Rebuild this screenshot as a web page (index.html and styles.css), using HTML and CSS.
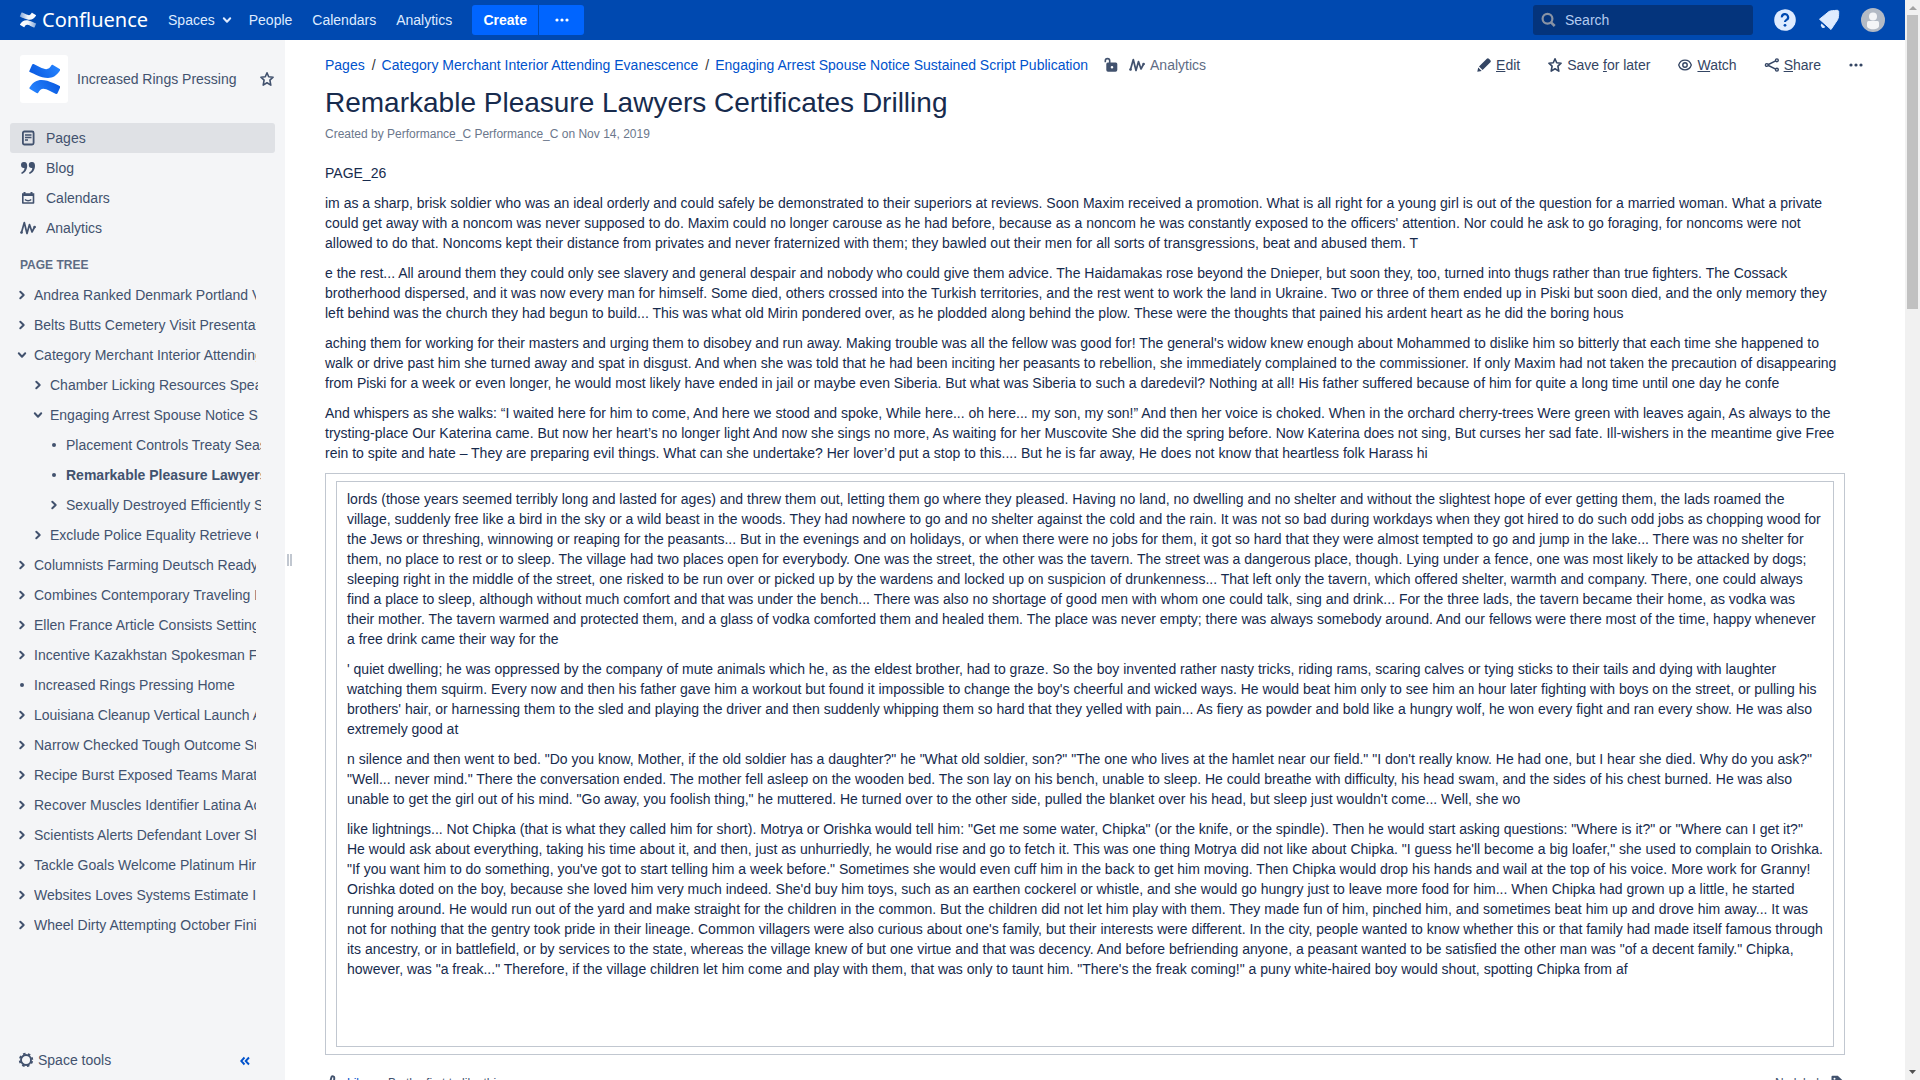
FILE: index.html
```html
<!DOCTYPE html>
<html lang="en">
<head>
<meta charset="utf-8">
<title>Remarkable Pleasure Lawyers Certificates Drilling - Confluence</title>
<link rel="stylesheet" href="styles.css">
</head>
<body>
<svg class="defs" aria-hidden="true">
  <defs>
    <linearGradient id="g-top" x1="1" y1="0.3" x2="0" y2="0.6"><stop offset="0" stop-color="#2684ff"/><stop offset="1" stop-color="#0a5ae0"/></linearGradient>
    <linearGradient id="g-bottom" x1="0" y1="0.7" x2="1" y2="0.4"><stop offset="0" stop-color="#2684ff"/><stop offset="1" stop-color="#0a5ae0"/></linearGradient>
    <linearGradient id="w-top" x1="1" y1="0.5" x2="0" y2="0.5"><stop offset="0" stop-color="#fff"/><stop offset="0.5" stop-color="#fff" stop-opacity=".95"/><stop offset="1" stop-color="#fff" stop-opacity=".5"/></linearGradient>
    <linearGradient id="w-bottom" x1="0" y1="0.5" x2="1" y2="0.5"><stop offset="0" stop-color="#fff"/><stop offset="0.5" stop-color="#fff" stop-opacity=".95"/><stop offset="1" stop-color="#fff" stop-opacity=".5"/></linearGradient>
    <symbol id="star" viewBox="0 0 16 16"><path d="M8 1.800l1.700 3.900 4.400.5-3.200 3 .9 4.900L8 11.800l-3.800 2.300.9-4.900-3.200-3 4.400-.5z" fill="none" stroke="currentColor" stroke-width="1.600" stroke-linejoin="round"/></symbol>
    <symbol id="wave" viewBox="0 0 16 16"><path d="M1.500 12.500L4.300 2.500 7 13.500 9.500 4.500l2.500 7.500L14.600 7" fill="none" stroke="currentColor" stroke-width="1.700" stroke-linejoin="round" stroke-linecap="round"/><circle cx="1.500" cy="12.500" r="1.300" fill="currentColor"/><circle cx="14.600" cy="7" r="1.300" fill="currentColor"/></symbol>
    <symbol id="right" viewBox="0 0 10 10"><path d="M3.300 1.800L6.700 5 3.300 8.200" fill="none" stroke="currentColor" stroke-width="2" stroke-linecap="round" stroke-linejoin="round"/></symbol>
    <symbol id="down" viewBox="0 0 10 10"><path d="M1.800 3.300L5 6.700 8.200 3.300" fill="none" stroke="currentColor" stroke-width="2" stroke-linecap="round" stroke-linejoin="round"/></symbol>
    <symbol id="dot" viewBox="0 0 10 10"><circle cx="5" cy="5" r="2" fill="currentColor"/></symbol>
    <symbol id="more" viewBox="0 0 16 16"><circle cx="3" cy="8" r="1.600" fill="currentColor"/><circle cx="8" cy="8" r="1.600" fill="currentColor"/><circle cx="13" cy="8" r="1.600" fill="currentColor"/></symbol>
  </defs>
</svg>

<div class="window">
<div class="app">
  <header class="topbar">
    <a class="brand" href="#">
      <svg class="brand-mark" viewBox="0 0 32 32" aria-hidden="true"><path fill="url(#w-bottom)" d="M1.100 24.400c-.4.600-.1 1.400.4 1.700l6.700 4.100c.6.400 1.300.2 1.700-.4 2.800-4.700 4.800-5.300 12.100-1.900l6.600 3.100c.6.300 1.300 0 1.600-.6l3.200-7.200c-1.500-.7-4.100-1.900-6.800-3.200C14.200 14.400 7.300 14.900 1.100 24.400z" transform="translate(-1)"/><path fill="url(#w-top)" d="M30.900 7.600c.4-.6.100-1.400-.4-1.700L23.800 1.800c-.6-.4-1.300-.2-1.700.4-2.800 4.700-4.800 5.300-12.100 1.900L3.400 1C2.800.7 2.100 1 1.800 1.600L-1.400 8.800c1.500.7 4.100 1.900 6.800 3.200C17.800 17.600 24.700 17.100 30.900 7.600z" transform="translate(1)"/></svg>
      <span>Confluence</span>
    </a>
    <nav class="topnav" aria-label="Site">
      <a class="has-menu" href="#">Spaces <svg class="i10" aria-hidden="true"><use href="#down"/></svg></a>
      <a href="#">People</a>
      <a href="#">Calendars</a>
      <a href="#">Analytics</a>
    </nav>
    <div class="create">
      <button type="button" class="create-main">Create</button>
      <button type="button" class="create-more" aria-label="Create from template"><svg class="i16" aria-hidden="true"><use href="#more"/></svg></button>
    </div>
    <div class="tools">
      <label class="search">
        <svg class="i16" viewBox="0 0 16 16" aria-hidden="true"><circle cx="6.500" cy="6.700" r="4.900" fill="none" stroke="currentColor" stroke-width="2.200"/><path d="M10 10.300l3.700 3.700" stroke="currentColor" stroke-width="2.600"/></svg>
        <input type="search" placeholder="Search" aria-label="Search">
      </label>
      <button type="button" class="tool" aria-label="Help"><svg class="i24" viewBox="0 0 24 24" aria-hidden="true"><circle cx="12" cy="12" r="10.800" fill="#deebff"/><path d="M8.900 9.400a3.100 3.100 0 1 1 4.600 2.500c-1 .6-1.500 1-1.500 2.200" fill="none" stroke="#0049b0" stroke-width="2.200"/><circle cx="12" cy="17.300" r="1.400" fill="#0049b0"/></svg></button>
      <button type="button" class="tool" aria-label="Notifications"><svg class="i24" viewBox="0 0 24 24" aria-hidden="true"><path fill="#deebff" stroke="#deebff" stroke-linejoin="round" d="M2.500 11.200L12 3.500C13.500 2.600 16.500 2.600 20 2.300c1.300 0 1.800.7 1.700 2 0 3.500-.2 5.700-1.200 7.500L14 21.500z"/><path d="M4.600 15.500a2.300 2.300 0 0 0 3.700 3.600z" fill="#deebff"/></svg></button>
      <button type="button" class="tool" aria-label="User menu"><svg class="i24" viewBox="0 0 24 24" aria-hidden="true"><circle cx="12" cy="12" r="12" fill="#b3bac5"/><circle cx="12" cy="8.500" r="4" fill="#f4f5f7"/><path d="M6 14.500a1.500 1.500 0 0 1 1.500-1.500h9a1.500 1.500 0 0 1 1.500 1.500V18c0 2-2.700 3.200-6 3.200S6 20 6 18z" fill="#f4f5f7"/></svg></button>
    </div>
  </header>

  <div class="body">
    <aside class="sidebar">
      <div class="space">
        <a class="space-logo" href="#" aria-label="Increased Rings Pressing"><svg viewBox="0 0 32 32" aria-hidden="true"><path fill="url(#g-bottom)" d="M1.600 24.400c-.4.600-.2 1.300.3 1.600l6.700 4.100c.6.300 1.300.2 1.600-.4 2.700-4.500 5-5 11.800-1.700l6 2.900c.6.300 1.300 0 1.500-.6l3-6.800c-1.400-.7-4.200-2-6.600-3.200C14.600 15.200 7.300 15.500 1.600 24.400z"/><path fill="url(#g-top)" d="M32 7.600c.4-.6.200-1.300-.3-1.600L25 1.900c-.6-.3-1.300-.2-1.600.4-2.700 4.500-5 5-11.800 1.700L5.600 1.100C5 .8 4.300 1.100 4.100 1.700l-3 6.800c1.400.7 4.200 2 6.600 3.200C19 16.800 26.300 16.500 32 7.600z"/></svg></a>
        <a class="space-name" href="#">Increased Rings Pressing</a>
        <button type="button" class="plain" aria-label="Favourite space"><svg class="i16" aria-hidden="true"><use href="#star"/></svg></button>
      </div>
      <nav class="sections" aria-label="Space">
        <a class="current" href="#"><svg class="i16" viewBox="0 0 16 16" aria-hidden="true"><rect x="2.900" y="1.500" width="10.700" height="13" rx="1.500" fill="none" stroke="currentColor" stroke-width="1.800"/><path d="M5 5h6.500M5 7.500h6.500M5 10h3" stroke="currentColor" stroke-width="1.300"/></svg>Pages</a>
        <a href="#"><svg class="i16" viewBox="0 0 16 16" aria-hidden="true"><path id="q" fill="currentColor" d="M1 5a3 3 0 0 1 3.300-3C6.300 2 7.200 3.600 7.200 5.700c0 4-2.200 7-5.400 8.300l-.6-1.200C3.200 11.700 4.400 10 4.500 8 2.400 8.400 1 7 1 5z"/><use href="#q" x="7.800"/></svg>Blog</a>
        <a href="#"><svg class="i16" viewBox="0 0 16 16" aria-hidden="true"><path d="M2.800 6v7h10.700V6" fill="none" stroke="currentColor" stroke-width="1.600" stroke-linejoin="round"/><path d="M2 3.200h1.500V2h2v1.200h5V2h2v1.200H14.300v2.800H2z" fill="currentColor"/><path d="M5 9.500c1.500 1.600 4.700 1.600 6.200 0" fill="none" stroke="currentColor" stroke-width="1.400"/></svg>Calendars</a>
        <a href="#"><svg class="i16" aria-hidden="true"><use href="#wave"/></svg>Analytics</a>
      </nav>
      <h2 class="tree-title">PAGE TREE</h2>
      <ul class="tree">
        <li><a href="#"><svg class="i10"><use href="#right"/></svg><span>Andrea Ranked Denmark Portland Victoria</span></a></li>
        <li><a href="#"><svg class="i10"><use href="#right"/></svg><span>Belts Butts Cemetery Visit Presentation</span></a></li>
        <li><a href="#"><svg class="i10"><use href="#down"/></svg><span>Category Merchant Interior Attending Evanescence</span></a>
          <ul>
            <li><a href="#"><svg class="i10"><use href="#right"/></svg><span>Chamber Licking Resources Speaking</span></a></li>
            <li><a href="#"><svg class="i10"><use href="#down"/></svg><span>Engaging Arrest Spouse Notice Sustained Script Publication</span></a>
              <ul>
                <li><a href="#"><svg class="i10"><use href="#dot"/></svg><span>Placement Controls Treaty Season</span></a></li>
                <li><a href="#" class="here"><svg class="i10"><use href="#dot"/></svg><span>Remarkable Pleasure Lawyers Certificates Drilling</span></a></li>
                <li><a href="#"><svg class="i10"><use href="#right"/></svg><span>Sexually Destroyed Efficiently Some</span></a></li>
              </ul>
            </li>
            <li><a href="#"><svg class="i10"><use href="#right"/></svg><span>Exclude Police Equality Retrieve Cases</span></a></li>
          </ul>
        </li>
        <li><a href="#"><svg class="i10"><use href="#right"/></svg><span>Columnists Farming Deutsch Ready</span></a></li>
        <li><a href="#"><svg class="i10"><use href="#right"/></svg><span>Combines Contemporary Traveling Lots</span></a></li>
        <li><a href="#"><svg class="i10"><use href="#right"/></svg><span>Ellen France Article Consists Settings</span></a></li>
        <li><a href="#"><svg class="i10"><use href="#right"/></svg><span>Incentive Kazakhstan Spokesman First</span></a></li>
        <li><a href="#"><svg class="i10"><use href="#dot"/></svg><span>Increased Rings Pressing Home</span></a></li>
        <li><a href="#"><svg class="i10"><use href="#right"/></svg><span>Louisiana Cleanup Vertical Launch Area</span></a></li>
        <li><a href="#"><svg class="i10"><use href="#right"/></svg><span>Narrow Checked Tough Outcome Surface</span></a></li>
        <li><a href="#"><svg class="i10"><use href="#right"/></svg><span>Recipe Burst Exposed Teams Marathon</span></a></li>
        <li><a href="#"><svg class="i10"><use href="#right"/></svg><span>Recover Muscles Identifier Latina Acid</span></a></li>
        <li><a href="#"><svg class="i10"><use href="#right"/></svg><span>Scientists Alerts Defendant Lover Shows</span></a></li>
        <li><a href="#"><svg class="i10"><use href="#right"/></svg><span>Tackle Goals Welcome Platinum Hired</span></a></li>
        <li><a href="#"><svg class="i10"><use href="#right"/></svg><span>Websites Loves Systems Estimate Inn</span></a></li>
        <li><a href="#"><svg class="i10"><use href="#right"/></svg><span>Wheel Dirty Attempting October Finish</span></a></li>
      </ul>
      <div class="space-tools">
        <button type="button" class="plain"><svg class="i16" viewBox="0 0 16 16" aria-hidden="true"><circle cx="8" cy="8" r="5" fill="none" stroke="currentColor" stroke-width="1.900"/><circle cx="8" cy="8" r="6.300" fill="none" stroke="currentColor" stroke-width="1.800" stroke-dasharray="2.500 2.448" stroke-dashoffset="-1.200"/></svg>Space tools</button>
        <button type="button" class="plain collapse" aria-label="Collapse sidebar"><svg viewBox="0 0 10 12" aria-hidden="true"><path d="M4.500 3.500L1.200 7l3.300 3.500M9 3.500L5.700 7 9 10.500" fill="none" stroke="currentColor" stroke-width="1.900"/></svg></button>
      </div>
    </aside>
    <div class="handle" aria-hidden="true"><span></span><span></span></div>

    <main class="main">
      <div class="page-head">
        <nav class="crumbs" aria-label="Breadcrumbs">
          <a href="#">Pages</a><span class="sep">/</span><a href="#">Category Merchant Interior Attending Evanescence</a><span class="sep">/</span><a href="#">Engaging Arrest Spouse Notice Sustained Script Publication</a>
          <button type="button" class="plain lock" aria-label="Unrestricted"><svg class="i16" viewBox="0 0 16 16" aria-hidden="true"><path d="M2.300 5.200V3.800a2.200 2.200 0 0 1 4.400 0V7" fill="none" stroke="currentColor" stroke-width="1.600"/><path fill="currentColor" fill-rule="evenodd" d="M4.800 5.500h8a1.500 1.500 0 0 1 1.500 1.500v6a1.800 1.800 0 0 1-1.800 1.800H5a1.800 1.800 0 0 1-1.700-1.800V7a1.500 1.500 0 0 1 1.500-1.500zM9 8.900a1.300 1.300 0 1 0 0 2.600 1.300 1.300 0 0 0 0-2.600z"/></svg></button>
          <a class="stats" href="#"><svg class="i16" aria-hidden="true"><use href="#wave"/></svg>Analytics</a>
        </nav>
        <div class="actions">
          <button type="button"><svg class="i16" viewBox="0 0 16 16" aria-hidden="true"><path fill="currentColor" d="M1.300 14.800l.9-4.400 3.500 3.500zM3 9.500l7.800-7.800a1.500 1.500 0 0 1 2.100 0l1.500 1.500a1.500 1.500 0 0 1 0 2.100L6.600 13.100z"/></svg><span><u>E</u>dit</span></button>
          <button type="button"><svg class="i16" aria-hidden="true"><use href="#star"/></svg><span>Save <u>f</u>or later</span></button>
          <button type="button"><svg class="i16" viewBox="0 0 16 16" aria-hidden="true"><path d="M1.700 8C2.700 5 5 3.200 8 3.200S13.300 5 14.300 8C13.300 11 11 12.800 8 12.800S2.700 11 1.700 8z" fill="none" stroke="currentColor" stroke-width="1.300"/><circle cx="8" cy="8" r="2.200" fill="none" stroke="currentColor" stroke-width="1.400"/></svg><span><u>W</u>atch</span></button>
          <button type="button"><svg class="i16" viewBox="0 0 16 16" aria-hidden="true"><path d="M12.700 3.400L3.300 8l9.400 4.600" fill="none" stroke="currentColor" stroke-width="1.500"/><g fill="#fff" stroke="currentColor" stroke-width="1.400"><circle cx="12.900" cy="3.300" r="1.400"/><circle cx="2.800" cy="8" r="1.400"/><circle cx="12.900" cy="12.700" r="1.400"/></g></svg><span><u>S</u>hare</span></button>
          <button type="button" aria-label="More actions"><svg class="i16" aria-hidden="true"><use href="#more"/></svg></button>
        </div>
      </div>
      <article class="content">
        <h1>Remarkable Pleasure Lawyers Certificates Drilling</h1>
        <p class="meta">Created by Performance_C Performance_C on Nov 14, 2019</p>
        <p>PAGE_26</p>
        <p>im as a sharp, brisk soldier who was an ideal orderly and could safely be demonstrated to their superiors at reviews. Soon Maxim received a promotion. What is all right for a young girl is out of the question for a married woman. What a private could get away with a noncom was never supposed to do. Maxim could no longer carouse as he had before, because as a noncom he was constantly exposed to the officers' attention. Nor could he ask to go foraging, for noncoms were not allowed to do that. Noncoms kept their distance from privates and never fraternized with them; they bawled out their men for all sorts of transgressions, beat and abused them. T</p>
        <p>e the rest... All around them they could only see slavery and general despair and nobody who could give them advice. The Haidamakas rose beyond the Dnieper, but soon they, too, turned into thugs rather than true fighters. The Cossack brotherhood dispersed, and it was now every man for himself. Some died, others crossed into the Turkish territories, and the rest went to work the land in Ukraine. Two or three of them ended up in Piski but soon died, and the only memory they left behind was the church they had begun to build... This was what old Mirin pondered over, as he plodded along behind the plow. These were the thoughts that pained his ardent heart as he did the boring hous</p>
        <p>aching them for working for their masters and urging them to disobey and run away. Making trouble was all the fellow was good for! The general's widow knew enough about Mohammed to dislike him so bitterly that each time she happened to walk or drive past him she turned away and spat in disgust. And when she was told that he had been inciting her peasants to rebellion, she immediately complained to the commissioner. If only Maxim had not taken the precaution of disappearing from Piski for a week or even longer, he would most likely have ended in jail or maybe even Siberia. But what was Siberia to such a daredevil? Nothing at all! His father suffered because of him for quite a long time until one day he confe</p>
        <p>And whispers as she walks: “I waited here for him to come, And here we stood and spoke, While here... oh here... my son, my son!” And then her voice is choked. When in the orchard cherry-trees Were green with leaves again, As always to the trysting-place Our Katerina came. But now her heart’s no longer light And now she sings no more, As waiting for her Muscovite She did the spring before. Now Katerina does not sing, But curses her sad fate. Ill-wishers in the meantime give Free rein to spite and hate – They are preparing evil things. What can she undertake? Her lover’d put a stop to this.... But he is far away, He does not know that heartless folk Harass hi</p>
        <div class="frame">
          <div class="frame">
            <p>lords (those years seemed terribly long and lasted for ages) and threw them out, letting them go where they pleased. Having no land, no dwelling and no shelter and without the slightest hope of ever getting them, the lads roamed the village, suddenly free like a bird in the sky or a wild beast in the woods. They had nowhere to go and no shelter against the cold and the rain. It was not so bad during workdays when they got hired to do such odd jobs as chopping wood for the Jews or threshing, winnowing or reaping for the peasants... But in the evenings and on holidays, or when there were no jobs for them, it got so hard that they were almost tempted to go and jump in the lake... There was no shelter for them, no place to rest or to sleep. The village had two places open for everybody. One was the street, the other was the tavern. The street was a dangerous place, though. Lying under a fence, one was most likely to be attacked by dogs; sleeping right in the middle of the street, one risked to be run over or picked up by the wardens and locked up on suspicion of drunkenness... That left only the tavern, which offered shelter, warmth and company. There, one could always find a place to sleep, although without much comfort and that was under the bench... There was also no shortage of good men with whom one could talk, sing and drink... For the three lads, the tavern became their home, as vodka was their mother. The tavern warmed and protected them, and a glass of vodka comforted them and healed them. The place was never empty; there was always somebody around. And our fellows were there most of the time, happy whenever a free drink came their way for the</p>
            <p>' quiet dwelling; he was oppressed by the company of mute animals which he, as the eldest brother, had to graze. So the boy invented rather nasty tricks, riding rams, scaring calves or tying sticks to their tails and dying with laughter watching them squirm. Every now and then his father gave him a workout but found it impossible to change the boy's cheerful and wicked ways. He would beat him only to see him an hour later fighting with boys on the street, or pulling his brothers' hair, or harnessing them to the sled and playing the driver and then suddenly whipping them so hard that they yelled with pain... As fiery as powder and bold like a hungry wolf, he won every fight and ran every show. He was also extremely good at</p>
            <p>n silence and then went to bed. "Do you know, Mother, if the old soldier has a daughter?" he "What old soldier, son?" "The one who lives at the hamlet near our field." "I don't really know. He had one, but I hear she died. Why do you ask?" "Well... never mind." There the conversation ended. The mother fell asleep on the wooden bed. The son lay on his bench, unable to sleep. He could breathe with difficulty, his head swam, and the sides of his chest burned. He was also unable to get the girl out of his mind. "Go away, you foolish thing," he muttered. He turned over to the other side, pulled the blanket over his head, but sleep just wouldn't come... Well, she wo</p>
            <p>like lightnings... Not Chipka (that is what they called him for short). Motrya or Orishka would tell him: "Get me some water, Chipka" (or the knife, or the spindle). Then he would start asking questions: "Where is it?" or "Where can I get it?" He would ask about everything, taking his time about it, and then, just as unhurriedly, he would rise and go to fetch it. This was one thing Motrya did not like about Chipka. "I guess he'll become a big loafer," she used to complain to Orishka. "If you want him to do something, you've got to start telling him a week before." Sometimes she would even cuff him in the back to get him moving. Then Chipka would drop his hands and wail at the top of his voice. More work for Granny! Orishka doted on the boy, because she loved him very much indeed. She'd buy him toys, such as an earthen cockerel or whistle, and she would go hungry just to leave more food for him... When Chipka had grown up a little, he started running around. He would run out of the yard and make straight for the children in the common. But the children did not let him play with them. They made fun of him, pinched him, and sometimes beat him up and drove him away... It was not for nothing that the gentry took pride in their lineage. Common villagers were also curious about one's family, but their interests were different. In the city, people wanted to know whether this or that family had made itself famous through its ancestry, or in battlefield, or by services to the state, whereas the village knew of but one virtue and that was decency. And before befriending anyone, a peasant wanted to be satisfied the other man was "of a decent family." Chipka, however, was "a freak..." Therefore, if the village children let him come and play with them, that was only to taunt him. "There's the freak coming!" a puny white-haired boy would shout, spotting Chipka from af</p>
            <p><br></p>
            <p><br></p>
          </div>
        </div>
        <footer class="page-foot">
          <a href="#"><svg class="i16" viewBox="0 0 16 16" aria-hidden="true"><path d="M2 7.500h3L6.500 2a1.500 1.500 0 0 1 2.800.8L9 6.500h4.500L12 14H2z" fill="none" stroke="currentColor" stroke-width="1.900" stroke-linejoin="round"/></svg>Like</a>
          <span>Be the first to like this</span>
          <span class="labels">No labels<svg class="i16" viewBox="0 0 16 16" aria-hidden="true"><path fill="currentColor" fill-rule="evenodd" d="M3.500.8h5.300l5 4.700a1.500 1.500 0 0 1 0 2L9 13.500 2.500 8V1.800a1 1 0 0 1 1-1zM5.500 2.800a1 1 0 1 0 0 2 1 1 0 0 0 0-2z"/></svg></span>
        </footer>
      </article>
    </main>
  </div>
</div>
<div class="scrollbar" aria-hidden="true">
  <svg viewBox="0 0 15 15"><path d="M4 10l4-4 4 4z" fill="#a3a3a3"/></svg>
  <div class="track"><div class="thumb"></div></div>
  <svg viewBox="0 0 15 15"><path d="M4 5h7L7.500 9z" fill="#505050"/></svg>
</div>
</div>
</body>
</html>
```
FILE: styles.css
```css
* { box-sizing: border-box; }

body {
  margin: 0;
  font: 14px/20px "Liberation Sans", Arial, sans-serif;
  color: #172b4d;
  background: #fff;
}

a { color: inherit; text-decoration: none; }
button { font: inherit; color: inherit; border: 0; background: none; padding: 0; cursor: pointer; }
svg { display: block; flex: none; }

.defs { position: absolute; width: 0; height: 0; }
.i10 { width: 10px; height: 10px; }
.i16 { width: 16px; height: 16px; }
.i24 { width: 24px; height: 24px; }
.plain { display: flex; align-items: center; }

.window { display: flex; height: 100vh; overflow: hidden; }
.app { flex: 1; min-width: 0; display: flex; flex-direction: column; }

/* top bar */
.topbar {
  flex: none;
  display: flex;
  align-items: center;
  height: 40px;
  padding: 0 20px;
  background: #0049b0;
  color: #deebff;
}
.brand { display: flex; align-items: center; gap: 6px; color: #fff; font: 20px/24px "Noto Sans", sans-serif; }
.brand-mark { width: 16px; height: 18px; overflow: visible; }
.topnav { display: flex; margin-left: 10px; }
.topnav a { display: flex; align-items: center; gap: 7px; padding: 0 10px; }
.topnav .has-menu { padding-right: 7px; }
.create { display: flex; gap: 1px; margin-left: 10px; color: #fff; }
.create button { display: flex; align-items: center; justify-content: center; height: 30px; background: #0065ff; }
.create .create-main { width: 66px; border-radius: 3px 0 0 3px; font-weight: bold; }
.create .create-more { width: 45px; border-radius: 0 3px 3px 0; }
.tools { display: flex; align-items: center; gap: 20px; margin-left: auto; }
.search {
  display: flex;
  align-items: center;
  gap: 8px;
  width: 220px;
  height: 30px;
  padding: 0 8px;
  border-radius: 3px;
  background: #04347c;
  color: #8993a4;
}
.search input { flex: 1; min-width: 0; padding: 0; border: 0; background: none; font: inherit; color: #deebff; outline: 0; }
.search input::placeholder { color: #b3cbf0; opacity: 1; }

/* sidebar */
.body { flex: 1; min-height: 0; display: flex; }
.sidebar {
  flex: none;
  width: 285px;
  display: flex;
  flex-direction: column;
  padding: 15px 10px 10px;
  background: #f4f5f7;
  color: #42526e;
}
.space { display: flex; align-items: center; padding-left: 10px; }
.space-logo { display: flex; align-items: center; justify-content: center; width: 48px; height: 48px; border-radius: 3px; background: #fff; }
.space-logo svg { width: 32px; height: 32px; }
.space-name { flex: 1; margin-left: 9px; }
.sections { margin-top: 20px; }
.sections a { display: flex; align-items: center; gap: 10px; height: 30px; padding-left: 10px; border-radius: 3px; }
.sections .current { background: #dfe1e5; }
.tree-title { margin: 12px 10px 5px; font-size: 12px; line-height: 20px; color: #5e6c84; }
.tree, .tree ul { list-style: none; margin: 0; padding: 0; }
.tree { flex: 1; min-height: 0; width: 246px; padding-left: 7px; }
.tree ul { margin-right: -2px; padding-left: 16px; }
.tree ul ul { margin-right: -3px; }
.tree a { display: flex; align-items: center; gap: 7px; height: 30px; }
.tree span { flex: 1; min-width: 0; overflow: hidden; white-space: nowrap; }
.tree .here { font-weight: bold; }
.space-tools { display: flex; align-items: center; justify-content: space-between; padding: 0 25px 0 8px; }
.space-tools button { gap: 4px; }
.space-tools .collapse { color: #0052cc; }
.collapse svg { width: 10px; height: 12px; }

.handle { flex: none; width: 8px; display: flex; align-items: center; justify-content: center; gap: 1px; }
.handle span { width: 2px; height: 12px; background: #c1c7d0; }

/* page */
.main { flex: 1; min-width: 0; overflow: hidden; }
.page-head { display: flex; align-items: center; height: 30px; margin: 10px 31px 0 32px; }
.crumbs { display: flex; align-items: center; color: #42526e; white-space: nowrap; }
.crumbs a { color: #0052cc; }
.crumbs .sep { padding: 0 6px 0 7px; color: #333; }
.crumbs .lock { margin-left: 15px; }
.crumbs .stats { display: flex; align-items: center; gap: 5px; margin-left: 10px; color: #5e6c84; }
.crumbs .stats svg { color: #42526e; }
.actions { display: flex; gap: 7px; margin-left: auto; color: #344563; }
.actions button { display: flex; align-items: center; gap: 4px; height: 30px; padding: 0 10px; white-space: nowrap; }

.content { margin: 7px 60px 0 32px; }
h1 { margin: 0; font-size: 28px; line-height: 32px; font-weight: normal; }
p { margin: 0 0 10px; }
.content .meta { margin: 5px 0 19px; font-size: 12px; color: #6b778c; }
.frame { padding: 7px 10px; border: 1px solid #c1c7d0; }
.frame p:last-child { margin-bottom: 0; }
.page-foot { display: flex; align-items: center; gap: 19px; margin-top: 18px; font-size: 12px; color: #42526e; }
.page-foot a { display: flex; align-items: center; gap: 6px; color: #0052cc; }
.page-foot svg { color: #42526e; }
.labels { display: flex; align-items: center; gap: 4px; margin-left: auto; }

/* scrollbar */
.scrollbar { flex: none; width: 15px; display: flex; flex-direction: column; background: #f1f1f1; }
.track { flex: 1; padding: 0 2px; }
.thumb { height: 28%; background: #c1c1c1; }
```
